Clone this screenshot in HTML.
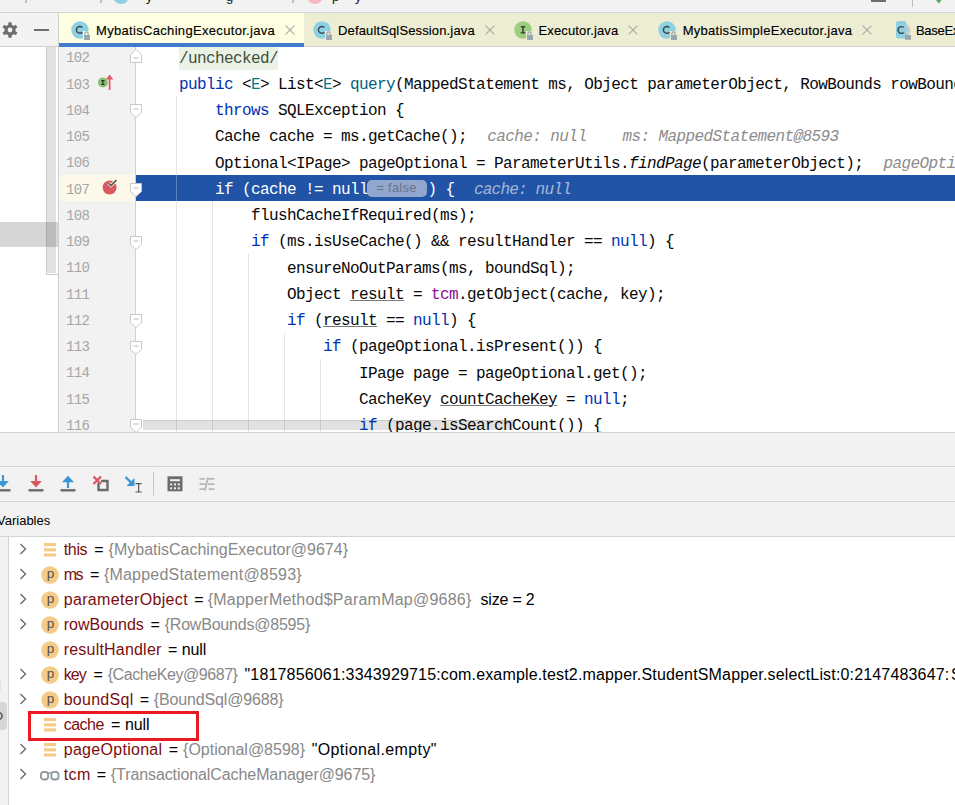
<!DOCTYPE html><html><head><meta charset="utf-8"><style>
*{margin:0;padding:0;box-sizing:border-box}
html,body{width:955px;height:805px;overflow:hidden;background:#f2f2f2;position:relative}
body{font-family:"Liberation Sans",sans-serif}
.a{position:absolute}
svg{position:absolute;overflow:visible}
.code{position:absolute;left:179px;font-family:"Liberation Mono",monospace;font-size:16px;letter-spacing:-0.6px;line-height:26.25px;height:26.25px;white-space:pre;color:#080808}
.ln{position:absolute;left:66px;font-family:"Liberation Mono",monospace;font-size:14px;letter-spacing:-0.6px;line-height:26.25px;color:#a6a6a6;white-space:pre}
.k{color:#0033b3}
.tp{color:#007e8a}
.md{color:#00627a}
.fd{color:#871094}
.it{font-style:italic}
.u{text-decoration:underline;text-decoration-color:#7a7a7a;text-underline-offset:1px;text-decoration-thickness:1px}
.hint{font-style:italic;color:#8c8c8c;position:relative;left:2.3px}
.tt{position:absolute;top:14px;font-size:13px;line-height:34px;color:#000;white-space:pre;-webkit-text-stroke:0.15px #000}
.vr{position:absolute;left:63px;font-size:16px;line-height:25px;height:25px;white-space:pre;color:#000}
.nm{color:#7b0c0c}
.gy{color:#888888}
.guide{position:absolute;width:1px;background:rgba(0,0,0,0.105)}
</style></head><body><div class="a" style="left:0;top:12px;width:955px;height:1px;background:#d4d4d4"></div><div class="a" style="left:25px;top:-8px;font-size:13px;line-height:13px;color:#999">/</div><div class="a" style="left:100px;top:-8px;font-size:13px;line-height:13px;color:#999">/</div><div class="a" style="left:113px;top:-12px;width:16px;height:16px;border-radius:50%;background:#8fd0e6"></div><div class="a" style="left:146px;top:-10px;font-size:13px;line-height:13px;color:#111">y</div><div class="a" style="left:226px;top:-10px;font-size:13px;line-height:13px;color:#111">g</div><div class="a" style="left:292px;top:-8px;font-size:13px;line-height:13px;color:#999">/</div><div class="a" style="left:307px;top:-12px;width:16px;height:16px;border-radius:50%;background:#f5b8c4"></div><div class="a" style="left:332px;top:-10px;font-size:13px;line-height:13px;color:#111">p</div><div class="a" style="left:355px;top:-10px;font-size:13px;line-height:13px;color:#111">y</div><div class="a" style="left:871px;top:0;width:15px;height:2px;background:#6e6e6e"></div><div class="a" style="left:912px;top:0;width:1px;height:7px;background:#bdbdbd"></div><svg style="left:0;top:0" width="955" height="12"><path d="M934.5 -2 L943 -2 L938.8 3.8 Z" fill="#59a869"/></svg><div class="a" style="left:0;top:13px;width:58px;height:33px;background:#f3f3f3"></div><div class="a" style="left:0;top:46px;width:58px;height:1px;background:#d0d0d0"></div><div class="a" style="left:58px;top:13px;width:1px;height:34px;background:#d0d0d0"></div><div class="a" style="left:59px;top:13px;width:896px;height:33px;background:#ededd4"></div><div class="a" style="left:59px;top:46px;width:896px;height:1px;background:#d0d0d0"></div><div class="a" style="left:59px;top:13px;width:245px;height:30px;background:#fefee3"></div><div class="a" style="left:59px;top:43px;width:245px;height:4px;background:#3e7dcb"></div><svg style="left:2px;top:22px" width="16" height="16" viewBox="0 0 16 16"><g fill="#6e6e6e"><rect x="6.3" y="0.3" width="3.4" height="4" transform="rotate(0 8 8)"/><rect x="6.3" y="0.3" width="3.4" height="4" transform="rotate(60 8 8)"/><rect x="6.3" y="0.3" width="3.4" height="4" transform="rotate(120 8 8)"/><rect x="6.3" y="0.3" width="3.4" height="4" transform="rotate(180 8 8)"/><rect x="6.3" y="0.3" width="3.4" height="4" transform="rotate(240 8 8)"/><rect x="6.3" y="0.3" width="3.4" height="4" transform="rotate(300 8 8)"/><circle cx="8" cy="8" r="5.6"/></g><circle cx="8" cy="8" r="2.4" fill="#f3f3f3"/></svg><div class="a" style="left:34px;top:29px;width:15px;height:2px;background:#6e6e6e"></div><svg style="left:69.8px;top:19.8px" width="20" height="20" viewBox="0 0 20 20"><circle cx="10" cy="10" r="8.7" fill="#8dd0e2"/><path d="M12.3 7.6 A3.4 3.4 0 1 0 12.3 12.2" fill="none" stroke="#3c474c" stroke-width="1.4"/><rect x="13" y="11" width="8" height="10" fill="#fefee3"/><path d="M14.9 15 V13.5 A1.6 1.6 0 0 1 18.1 13.5 V15" fill="none" stroke="#9ba6ae" stroke-width="1.2"/><rect x="14" y="15" width="6" height="5" fill="#9ba6ae"/></svg><div class="tt" style="left:96px;letter-spacing:0.32px">MybatisCachingExecutor.java</div><svg style="left:285.0px;top:25.0px" width="10" height="10" viewBox="0 0 10 10"><path d="M0.6 0.6 L9.4 9.4 M9.4 0.6 L0.6 9.4" stroke="#a8a8a8" stroke-width="1.1"/></svg><svg style="left:312.2px;top:19.9px" width="20" height="20" viewBox="0 0 20 20"><circle cx="10" cy="10" r="8.7" fill="#8dd0e2"/><path d="M12.3 7.6 A3.4 3.4 0 1 0 12.3 12.2" fill="none" stroke="#3c474c" stroke-width="1.4"/><rect x="13" y="11" width="8" height="10" fill="#ededd4"/><path d="M14.9 15 V13.5 A1.6 1.6 0 0 1 18.1 13.5 V15" fill="none" stroke="#9ba6ae" stroke-width="1.2"/><rect x="14" y="15" width="6" height="5" fill="#9ba6ae"/></svg><div class="tt" style="left:338px;letter-spacing:0.14px">DefaultSqlSession.java</div><svg style="left:485.0px;top:25.0px" width="10" height="10" viewBox="0 0 10 10"><path d="M0.6 0.6 L9.4 9.4 M9.4 0.6 L0.6 9.4" stroke="#a8a8a8" stroke-width="1.1"/></svg><svg style="left:512.5px;top:19.9px" width="20" height="20" viewBox="0 0 20 20"><circle cx="10" cy="10" r="8.7" fill="#9bce7e"/><path d="M7.8 6.8 H12.2 M10 6.8 V12.8 M7.8 12.8 H12.2" fill="none" stroke="#3c474c" stroke-width="1.6"/><rect x="13" y="11" width="8" height="10" fill="#ededd4"/><path d="M14.9 15 V13.5 A1.6 1.6 0 0 1 18.1 13.5 V15" fill="none" stroke="#9ba6ae" stroke-width="1.2"/><rect x="14" y="15" width="6" height="5" fill="#9ba6ae"/></svg><div class="tt" style="left:538.5px;letter-spacing:0.14px">Executor.java</div><svg style="left:628.0px;top:25.0px" width="10" height="10" viewBox="0 0 10 10"><path d="M0.6 0.6 L9.4 9.4 M9.4 0.6 L0.6 9.4" stroke="#a8a8a8" stroke-width="1.1"/></svg><svg style="left:657.0px;top:19.9px" width="20" height="20" viewBox="0 0 20 20"><circle cx="10" cy="10" r="8.7" fill="#8dd0e2"/><path d="M12.3 7.6 A3.4 3.4 0 1 0 12.3 12.2" fill="none" stroke="#3c474c" stroke-width="1.4"/><rect x="13" y="11" width="8" height="10" fill="#ededd4"/><path d="M14.9 15 V13.5 A1.6 1.6 0 0 1 18.1 13.5 V15" fill="none" stroke="#9ba6ae" stroke-width="1.2"/><rect x="14" y="15" width="6" height="5" fill="#9ba6ae"/></svg><div class="tt" style="left:682.7px;letter-spacing:0.27px">MybatisSimpleExecutor.java</div><svg style="left:862.0px;top:25.0px" width="10" height="10" viewBox="0 0 10 10"><path d="M0.6 0.6 L9.4 9.4 M9.4 0.6 L0.6 9.4" stroke="#a8a8a8" stroke-width="1.1"/></svg><svg style="left:885px;top:15px" width="30" height="30" viewBox="885 15 30 30"><path d="M905.5 23.5 Q910.5 26 910.5 30 Q910.5 34 906 36.5 Z" fill="#c5cbce"/><rect x="896" y="21" width="10.4" height="17.6" rx="2.6" fill="#8dd0e2"/><path d="M903.6 27.6 A3.2 3.4 0 1 0 903.6 32.4" fill="none" stroke="#3c474c" stroke-width="1.4"/><rect x="905" y="35" width="6" height="4.8" fill="#9ba6ae"/></svg><div class="tt" style="left:916px;letter-spacing:-0.3px">BaseExecutor.java</div><div class="a" style="left:0;top:47px;width:58px;height:385px;background:#fff"></div><div class="a" style="left:46px;top:47px;width:12px;height:228px;background:#fff;border-left:1px solid #cbcbcb;border-bottom:1px solid #cbcbcb"></div><div class="a" style="left:47px;top:47px;width:9px;height:225.5px;background:#e1e1e1"></div><div class="a" style="left:0;top:222px;width:58px;height:25px;background:rgba(0,0,0,0.16)"></div><div class="a" style="left:58px;top:47px;width:1px;height:385px;background:#cfcfcf"></div><div class="a" style="left:59px;top:47px;width:77px;height:385px;background:#f2f2f2"></div><div class="a" style="left:136px;top:47px;width:819px;height:385px;background:#fff"></div><div class="a" style="left:59px;top:175.00px;width:77px;height:26.25px;background:#fcf9eb"></div><div class="a" style="left:135px;top:47px;width:1px;height:385px;background:#d0d0d0"></div><div class="a" style="left:179px;top:47px;width:99px;height:23.00px;background:#eaf3e6"></div><div class="a" style="left:136px;top:175.00px;width:819px;height:26.25px;background:#2154a6"></div><div class="a" style="left:143px;top:420px;width:370px;height:11px;background:#e1e1e1;border-top:1px solid #cacaca;border-bottom:1px solid #fff"></div><div class="guide" style="left:176px;top:96.25px;height:335.75px"></div><div class="guide" style="left:212px;top:201.25px;height:230.75px"></div><div class="guide" style="left:248px;top:253.75px;height:178.25px"></div><div class="guide" style="left:284px;top:332.50px;height:99.50px"></div><div class="guide" style="left:320px;top:358.75px;height:73.25px"></div><div class="a" style="left:176px;top:175.00px;width:1px;height:26.25px;background:#5a80bf"></div><div class="code" style="top:45.65px"><span style="color:#3f4f3c">/unchecked/</span></div><div class="code" style="top:71.90px"><span class="k">public</span> &lt;<span class="tp">E</span>&gt; List&lt;<span class="tp">E</span>&gt; <span class="md">query</span>(MappedStatement ms, Object parameterObject, RowBounds rowBounds,</div><div class="code" style="top:98.15px">    <span class="k">throws</span> SQLException {</div><div class="code" style="top:124.40px">    Cache cache = ms.getCache();  <span class="hint">cache: null    ms: MappedStatement@8593</span></div><div class="code" style="top:150.65px">    Optional&lt;IPage&gt; pageOptional = ParameterUtils.<span class="it">findPage</span>(parameterObject);  <span class="hint">pageOptional: "Optional.empty"</span></div><div class="code" style="top:203.15px">        flushCacheIfRequired(ms);</div><div class="code" style="top:229.40px">        <span class="k">if</span> (ms.isUseCache() &amp;&amp; resultHandler == <span class="k">null</span>) {</div><div class="code" style="top:255.65px">            ensureNoOutParams(ms, boundSql);</div><div class="code" style="top:281.90px">            Object <span class="u">result</span> = <span class="fd">tcm</span>.getObject(cache, key);</div><div class="code" style="top:308.15px">            <span class="k">if</span> (<span class="u">result</span> == <span class="k">null</span>) {</div><div class="code" style="top:334.40px">                <span class="k">if</span> (pageOptional.isPresent()) {</div><div class="code" style="top:360.65px">                    IPage page = pageOptional.get();</div><div class="code" style="top:386.90px">                    CacheKey <span class="u">countCacheKey</span> = <span class="k">null</span>;</div><div class="code" style="top:413.15px">                    <span class="k">if</span> (page.isSearchCount()) {</div><div class="code" style="top:176.90px;color:#fff">    if (cache != null</div><div class="a" style="left:367px;top:179.5px;width:59.5px;height:17.5px;border-radius:5px;background:#91a7cd"></div><div class="a" style="left:376.5px;top:179px;font-size:13px;line-height:17px;color:#6c7288;white-space:pre;letter-spacing:0.2px">= false</div><div class="code" style="left:427.5px;top:176.90px;color:#fff">) {</div><div class="code" style="left:474px;top:176.90px;color:#a7b8d8;font-style:italic;letter-spacing:-0.8px">cache: null</div><div class="ln" style="top:45.25px">102</div><div class="ln" style="top:71.50px">103</div><div class="ln" style="top:97.75px">104</div><div class="ln" style="top:124.00px">105</div><div class="ln" style="top:150.25px">106</div><div class="ln" style="top:176.50px">107</div><div class="ln" style="top:202.75px">108</div><div class="ln" style="top:229.00px">109</div><div class="ln" style="top:255.25px">110</div><div class="ln" style="top:281.50px">111</div><div class="ln" style="top:307.75px">112</div><div class="ln" style="top:334.00px">113</div><div class="ln" style="top:360.25px">114</div><div class="ln" style="top:386.50px">115</div><div class="ln" style="top:412.75px">116</div><svg style="left:130px;top:49.3px" width="12" height="14" viewBox="0 0 12 14"><path d="M0.5 13.5 H11.5 V5.5 L6 0.5 L0.5 5.5 Z" fill="#fff" stroke="#c9c9c9" stroke-width="1"/><path d="M3.5 9.0 H8.5" stroke="#bbbbbb" stroke-width="1"/></svg><svg style="left:130px;top:104.2px" width="12" height="14" viewBox="0 0 12 14"><path d="M0.5 0.5 H11.5 V8.5 L6 13.5 L0.5 8.5 Z" fill="#fff" stroke="#c9c9c9" stroke-width="1"/><path d="M3.5 5.0 H8.5" stroke="#bbbbbb" stroke-width="1"/></svg><svg style="left:130px;top:183.0px" width="12" height="14" viewBox="0 0 12 14"><path d="M0.5 0.5 H11.5 V8.5 L6 13.5 L0.5 8.5 Z" fill="#fff" stroke="#c9c9c9" stroke-width="1"/><path d="M3.5 5.0 H8.5" stroke="#bbbbbb" stroke-width="1"/></svg><svg style="left:130px;top:235.5px" width="12" height="14" viewBox="0 0 12 14"><path d="M0.5 0.5 H11.5 V8.5 L6 13.5 L0.5 8.5 Z" fill="#fff" stroke="#c9c9c9" stroke-width="1"/><path d="M3.5 5.0 H8.5" stroke="#bbbbbb" stroke-width="1"/></svg><svg style="left:130px;top:314.2px" width="12" height="14" viewBox="0 0 12 14"><path d="M0.5 0.5 H11.5 V8.5 L6 13.5 L0.5 8.5 Z" fill="#fff" stroke="#c9c9c9" stroke-width="1"/><path d="M3.5 5.0 H8.5" stroke="#bbbbbb" stroke-width="1"/></svg><svg style="left:130px;top:340.5px" width="12" height="14" viewBox="0 0 12 14"><path d="M0.5 0.5 H11.5 V8.5 L6 13.5 L0.5 8.5 Z" fill="#fff" stroke="#c9c9c9" stroke-width="1"/><path d="M3.5 5.0 H8.5" stroke="#bbbbbb" stroke-width="1"/></svg><svg style="left:130px;top:419.2px" width="12" height="14" viewBox="0 0 12 14"><path d="M0.5 0.5 H11.5 V8.5 L6 13.5 L0.5 8.5 Z" fill="#fff" stroke="#c9c9c9" stroke-width="1"/><path d="M3.5 5.0 H8.5" stroke="#bbbbbb" stroke-width="1"/></svg><svg style="left:97px;top:77px" width="16" height="14" viewBox="0 0 16 14"><circle cx="5.9" cy="5.5" r="5" fill="#8cc26e"/><path d="M4.2 3.6 H7.6 M5.9 3.6 V7.4 M4.2 7.4 H7.6" stroke="#333" stroke-width="1.2"/></svg><svg style="left:104px;top:73px" width="12" height="18" viewBox="0 0 12 18"><path d="M5.6 17 V5" stroke="#e05a6a" stroke-width="1.8"/><path d="M1.8 6.5 L5.6 1.5 L9.4 6.5 Z" fill="#e05a6a"/></svg><svg style="left:100px;top:178px" width="20" height="18" viewBox="0 0 20 18"><circle cx="9.6" cy="9.5" r="7" fill="#db5860"/><path d="M8.5 5.2 L11 7.6 L16.5 2" fill="none" stroke="#fcf9eb" stroke-width="3.2"/><path d="M8.5 5.2 L11 7.6 L16.5 2" fill="none" stroke="#555" stroke-width="1.6"/></svg><div class="a" style="left:0;top:432px;width:955px;height:1px;background:#d0d0d0"></div><div class="a" style="left:0;top:466px;width:955px;height:1px;background:#d4d4d4"></div><div class="a" style="left:0;top:501px;width:955px;height:1px;background:#d4d4d4"></div><div class="a" style="left:0;top:536px;width:955px;height:1px;background:#d4d4d4"></div><div class="a" style="left:-3px;top:508px;font-size:13px;line-height:25px;color:#000">Variables</div><svg style="left:0;top:466px" width="240" height="36" viewBox="0 466 240 36"><path d="M3.0 475 V483" stroke="#3a96d6" stroke-width="2.2"/><path d="M-2.8 481 H8.8 L3.0 487.5 Z" fill="#3a96d6"/><path d="M-4.5 490.3 H10.5" stroke="#6b6b6b" stroke-width="2.4"/><path d="M36.0 475 V483" stroke="#db5860" stroke-width="2.2"/><path d="M30.2 481 H41.8 L36.0 487.5 Z" fill="#db5860"/><path d="M28.5 490.3 H43.5" stroke="#6b6b6b" stroke-width="2.4"/><path d="M68 481 V488" stroke="#3a96d6" stroke-width="2.2"/><path d="M62 482.2 H74 L68 475.7 Z" fill="#3a96d6"/><path d="M60.5 490.3 H75.5" stroke="#6b6b6b" stroke-width="2.4"/><path d="M98.5 490 V481 H107.5 V490 Z" fill="none" stroke="#6b6b6b" stroke-width="2.4"/><rect x="96" y="478" width="5" height="5" fill="#f2f2f2"/><path d="M93.5 476.5 L101 484 M101 476.5 L93.5 484" stroke="#db5860" stroke-width="2.4"/><path d="M125.5 477 L132.5 484" stroke="#3a96d6" stroke-width="2.4"/><path d="M134.5 478 V486 H126.5 Z" fill="#3a96d6"/><path d="M138.6 483.5 V492 M135.5 483.6 H141.7 M135.5 492 H141.7" stroke="#555" stroke-width="1.2"/><path d="M153.5 471.5 V495.5" stroke="#c8c8c8" stroke-width="1"/><rect x="167.5" y="476.3" width="15" height="15" fill="#6b6b6b"/><rect x="170" y="479.2" width="10" height="2" fill="#f2f2f2"/><rect x="170.2" y="483.4" width="2" height="2" fill="#f2f2f2"/><rect x="174.0" y="483.4" width="2" height="2" fill="#f2f2f2"/><rect x="177.8" y="483.4" width="2" height="2" fill="#f2f2f2"/><rect x="170.2" y="487.3" width="2" height="2" fill="#f2f2f2"/><rect x="174.0" y="487.3" width="2" height="2" fill="#f2f2f2"/><rect x="177.8" y="487.3" width="2" height="2" fill="#f2f2f2"/><path d="M199.5 478.8 H205 M199.5 484.1 H205.5 M199.5 489.1 H205 M208 478.8 H214.5 M208 484.1 H214.5 M208.5 489.1 H214.5 M208 477.5 L205 490.5" stroke="#b9b9b9" stroke-width="1.8" fill="none"/></svg><div class="a" style="left:0;top:537px;width:8px;height:268px;background:#f2f2f2"></div><div class="a" style="left:8px;top:537px;width:1px;height:268px;background:#d4d4d4"></div><div class="a" style="left:9px;top:537px;width:946px;height:268px;background:#fff"></div><div class="a" style="left:-6px;top:702px;width:13px;height:28px;border-radius:4px;background:#d6d6d6"></div><svg style="left:-6px;top:709px" width="10" height="14" viewBox="0 0 10 14"><circle cx="4.5" cy="7" r="3.6" fill="none" stroke="#555" stroke-width="1.5"/></svg><div class="a" style="left:-6px;top:679px;width:7px;height:12px;border-radius:2px;background:#e2e2e2"></div><svg style="left:19px;top:543.0px" width="9" height="12" viewBox="0 0 9 12"><path d="M1.5 1 L6.5 6 L1.5 11" fill="none" stroke="#6b6b6b" stroke-width="1.4"/></svg><svg style="left:44px;top:542.5px" width="12" height="14" viewBox="0 0 12 14"><rect x="0" y="0" width="12" height="3.2" fill="#f6cb87"/><rect x="0" y="5.3" width="12" height="3.1" fill="#f6cb87"/><rect x="0" y="10.4" width="12" height="3.1" fill="#f6cb87"/></svg><div class="vr nm" style="left:63.70px;top:537.0px;letter-spacing:-0.325px;">this</div><div class="vr " style="left:94.20px;top:537.0px;letter-spacing:0.000px;">=</div><div class="vr gy" style="left:108.60px;top:537.0px;letter-spacing:-0.004px;">{MybatisCachingExecutor@9674}</div><svg style="left:19px;top:568.0px" width="9" height="12" viewBox="0 0 9 12"><path d="M1.5 1 L6.5 6 L1.5 11" fill="none" stroke="#6b6b6b" stroke-width="1.4"/></svg><svg style="left:41px;top:566.0px" width="18" height="18" viewBox="0 0 18 18"><circle cx="9" cy="9" r="8.8" fill="#f6cb87"/><text x="9.6" y="12.1" text-anchor="middle" font-family="Liberation Sans" font-size="13.5" fill="#505050">p</text></svg><div class="vr nm" style="left:63.70px;top:562.0px;letter-spacing:-1.575px;">ms</div><div class="vr " style="left:90.10px;top:562.0px;letter-spacing:0.000px;">=</div><div class="vr gy" style="left:103.90px;top:562.0px;letter-spacing:0.212px;">{MappedStatement@8593}</div><svg style="left:19px;top:593.0px" width="9" height="12" viewBox="0 0 9 12"><path d="M1.5 1 L6.5 6 L1.5 11" fill="none" stroke="#6b6b6b" stroke-width="1.4"/></svg><svg style="left:41px;top:591.0px" width="18" height="18" viewBox="0 0 18 18"><circle cx="9" cy="9" r="8.8" fill="#f6cb87"/><text x="9.6" y="12.1" text-anchor="middle" font-family="Liberation Sans" font-size="13.5" fill="#505050">p</text></svg><div class="vr nm" style="left:63.70px;top:587.0px;letter-spacing:0.341px;">parameterObject</div><div class="vr " style="left:194.20px;top:587.0px;letter-spacing:0.000px;">=</div><div class="vr gy" style="left:207.70px;top:587.0px;letter-spacing:0.235px;">{MapperMethod$ParamMap@9686}</div><div class="vr " style="left:480.50px;top:587.0px;letter-spacing:-0.204px;">size = 2</div><svg style="left:19px;top:618.0px" width="9" height="12" viewBox="0 0 9 12"><path d="M1.5 1 L6.5 6 L1.5 11" fill="none" stroke="#6b6b6b" stroke-width="1.4"/></svg><svg style="left:41px;top:616.0px" width="18" height="18" viewBox="0 0 18 18"><circle cx="9" cy="9" r="8.8" fill="#f6cb87"/><text x="9.6" y="12.1" text-anchor="middle" font-family="Liberation Sans" font-size="13.5" fill="#505050">p</text></svg><div class="vr nm" style="left:63.70px;top:612.0px;letter-spacing:0.013px;">rowBounds</div><div class="vr " style="left:150.40px;top:612.0px;letter-spacing:0.000px;">=</div><div class="vr gy" style="left:164.70px;top:612.0px;letter-spacing:-0.210px;">{RowBounds@8595}</div><svg style="left:41px;top:641.0px" width="18" height="18" viewBox="0 0 18 18"><circle cx="9" cy="9" r="8.8" fill="#f6cb87"/><text x="9.6" y="12.1" text-anchor="middle" font-family="Liberation Sans" font-size="13.5" fill="#505050">p</text></svg><div class="vr nm" style="left:63.70px;top:637.0px;letter-spacing:0.206px;">resultHandler</div><div class="vr " style="left:167.90px;top:637.0px;letter-spacing:0.000px;">=</div><div class="vr " style="left:181.80px;top:637.0px;letter-spacing:-0.158px;">null</div><svg style="left:19px;top:668.0px" width="9" height="12" viewBox="0 0 9 12"><path d="M1.5 1 L6.5 6 L1.5 11" fill="none" stroke="#6b6b6b" stroke-width="1.4"/></svg><svg style="left:41px;top:666.0px" width="18" height="18" viewBox="0 0 18 18"><circle cx="9" cy="9" r="8.8" fill="#f6cb87"/><text x="9.6" y="12.1" text-anchor="middle" font-family="Liberation Sans" font-size="13.5" fill="#505050">p</text></svg><div class="vr nm" style="left:63.70px;top:662.0px;letter-spacing:-0.888px;">key</div><div class="vr " style="left:93.40px;top:662.0px;letter-spacing:0.000px;">=</div><div class="vr gy" style="left:107.70px;top:662.0px;letter-spacing:-0.434px;">{CacheKey@9687}</div><div class="vr " style="left:244.50px;top:662.0px;letter-spacing:0.164px;">&quot;1817856061:3343929715:com.example.test2.mapper.StudentSMapper.selectList:0:2147483647:</div><div class="vr" style="left:951px;top:662.0px">SELECT</div><svg style="left:19px;top:693.0px" width="9" height="12" viewBox="0 0 9 12"><path d="M1.5 1 L6.5 6 L1.5 11" fill="none" stroke="#6b6b6b" stroke-width="1.4"/></svg><svg style="left:41px;top:691.0px" width="18" height="18" viewBox="0 0 18 18"><circle cx="9" cy="9" r="8.8" fill="#f6cb87"/><text x="9.6" y="12.1" text-anchor="middle" font-family="Liberation Sans" font-size="13.5" fill="#505050">p</text></svg><div class="vr nm" style="left:63.70px;top:687.0px;letter-spacing:0.268px;">boundSql</div><div class="vr " style="left:139.80px;top:687.0px;letter-spacing:0.000px;">=</div><div class="vr gy" style="left:153.80px;top:687.0px;letter-spacing:-0.148px;">{BoundSql@9688}</div><svg style="left:44px;top:717.5px" width="12" height="14" viewBox="0 0 12 14"><rect x="0" y="0" width="12" height="3.2" fill="#f6cb87"/><rect x="0" y="5.3" width="12" height="3.1" fill="#f6cb87"/><rect x="0" y="10.4" width="12" height="3.1" fill="#f6cb87"/></svg><div class="vr nm" style="left:63.70px;top:712.0px;letter-spacing:-0.512px;">cache</div><div class="vr " style="left:111.00px;top:712.0px;letter-spacing:0.000px;">=</div><div class="vr " style="left:125.00px;top:712.0px;letter-spacing:-0.092px;">null</div><svg style="left:19px;top:743.0px" width="9" height="12" viewBox="0 0 9 12"><path d="M1.5 1 L6.5 6 L1.5 11" fill="none" stroke="#6b6b6b" stroke-width="1.4"/></svg><svg style="left:44px;top:742.5px" width="12" height="14" viewBox="0 0 12 14"><rect x="0" y="0" width="12" height="3.2" fill="#f6cb87"/><rect x="0" y="5.3" width="12" height="3.1" fill="#f6cb87"/><rect x="0" y="10.4" width="12" height="3.1" fill="#f6cb87"/></svg><div class="vr nm" style="left:63.70px;top:737.0px;letter-spacing:0.295px;">pageOptional</div><div class="vr " style="left:168.80px;top:737.0px;letter-spacing:0.000px;">=</div><div class="vr gy" style="left:183.10px;top:737.0px;letter-spacing:-0.016px;">{Optional@8598}</div><div class="vr " style="left:311.70px;top:737.0px;letter-spacing:0.387px;">&quot;Optional.empty&quot;</div><svg style="left:19px;top:768.0px" width="9" height="12" viewBox="0 0 9 12"><path d="M1.5 1 L6.5 6 L1.5 11" fill="none" stroke="#6b6b6b" stroke-width="1.4"/></svg><svg style="left:39px;top:768.8px" width="22" height="12" viewBox="0 0 22 12"><rect x="1.9" y="2.9" width="7.2" height="7.6" rx="2.8" fill="none" stroke="#8a979e" stroke-width="1.8"/><rect x="12.3" y="2.9" width="7.2" height="7.6" rx="2.8" fill="none" stroke="#8a979e" stroke-width="1.8"/><path d="M9 3.9 H12.5" stroke="#8a979e" stroke-width="1.3"/></svg><div class="vr nm" style="left:63.70px;top:762.0px;letter-spacing:0.375px;">tcm</div><div class="vr " style="left:96.80px;top:762.0px;letter-spacing:0.000px;">=</div><div class="vr gy" style="left:110.80px;top:762.0px;letter-spacing:-0.090px;">{TransactionalCacheManager@9675}</div><div class="a" style="left:28px;top:711px;width:171px;height:30px;border:3px solid #ea1a22"></div></body></html>
